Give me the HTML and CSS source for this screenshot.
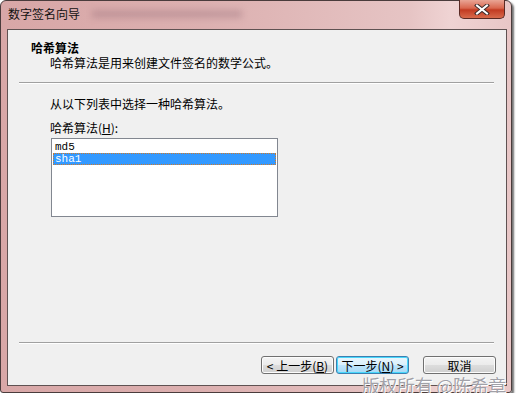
FILE: index.html
```html
<!DOCTYPE html>
<html lang="zh-CN">
<head>
<meta charset="utf-8">
<title>数字签名向导</title>
<link rel="stylesheet" href="styles.css">
</head>
<body>
<div class="window">
	<div class="titlebar">
		<span class="caption">数字签名向导</span>
		<span class="smudge"></span>
		<span class="close">
			<svg width="16" height="11" viewBox="0 0 16 11">
				<path d="M3 1.5 L13 9.5 M13 1.5 L3 9.5" stroke="#3a2a2a" stroke-width="4" stroke-linecap="square"/>
				<path d="M3 1.5 L13 9.5 M13 1.5 L3 9.5" stroke="#fff" stroke-width="2" stroke-linecap="square"/>
			</svg>
		</span>
	</div>
	<div class="client">
		<div class="header">
			<div class="head-title">哈希算法</div>
			<div class="head-sub">哈希算法是用来创建文件签名的数学公式。</div>
		</div>
		<div class="rule"></div>
		<div class="content">
			<div class="intro">从以下列表中选择一种哈希算法。</div>
			<div class="label">哈希算法(<u>H</u>):</div>
			<ul class="listbox">
				<li>md5</li>
				<li class="select">sha1</li>
			</ul>
		</div>
		<div class="rule"></div>
		<div class="buttons">
			<span class="btn">&lt; 上一步(<u>B</u>)</span>
			<span class="btn default">下一步(<u>N</u>) &gt;</span>
			<span class="btn cancel">取消</span>
		</div>
		<div class="mark">版权所有 @陈希章</div>
	</div>
</div>
</body>
</html>
```

FILE: styles.css
```css
*{
	padding: 0;
	margin: 0;
	box-sizing: border-box;
}
body{
	background: #fff;
	font: 12px/15px "Noto Sans CJK SC", sans-serif;
	color: #000;
}
ul,li{
	list-style: none;
}
.window {
	width: 512px;
	height: 393px;
	border: 1px solid #4a3c3c;
	border-radius: 6px 6px 3px 3px;
	background: linear-gradient(to right, #d8a7a7, #dcb0b0 40%, #e6c4c4 80%, #efd3d3 88%, #e8c6c6);
	box-shadow: 2px 2px 2px rgba(0,0,0,.55);
}
.titlebar {
	display: flex;
	align-items: flex-start;
	height: 28px;
	padding-left: 7px;
}
.caption {
	margin-top: 5px;
	color: #111;
}
.smudge {
	width: 150px;
	height: 8px;
	margin: 9px 0 0 12px;
	background: rgba(150,110,120,.35);
	filter: blur(3px);
}
.close {
	display: flex;
	justify-content: center;
	align-items: center;
	margin-left: auto;
	margin-right: 6px;
	width: 46px;
	height: 19px;
	margin-top: -1px;
	border: 1px solid #5a2a24;
	border-top: none;
	border-radius: 0 0 5px 5px;
	background: linear-gradient(to bottom, #e9a595, #d9674f 45%, #c23b22 55%, #d86a4c);
}
.client {
	position: relative;
	width: 500px;
	height: 357px;
	margin-left: 6px;
	border: 1px solid #5f5252;
	background: #f0f0f0;
}
.header {
	height: 52px;
	padding: 10px 0 0 23px;
}
.head-title {
	font-weight: bold;
}
.head-sub {
	padding-left: 19px;
}
.rule {
	margin-left: 11px;
	width: 475px;
	height: 2px;
	border-top: 1px solid #a0a0a0;
	border-bottom: 1px solid #fff;
}
.content {
	height: 258px;
	padding: 12px 0 0 42px;
}
.label {
	margin-top: 9px;
}
.listbox {
	margin: 3px 0 0 1px;
	width: 227px;
	height: 79px;
	padding: 2px 1px;
	border: 1px solid #828790;
	background: #fff;
	font: 11px/12px "Liberation Mono", monospace;
}
.listbox li {
	height: 12px;
	padding-left: 2px;
}
.listbox li.select {
	background: #3399ff;
	color: #fff;
	outline: 1px dotted #d07a2a;
	outline-offset: -1px;
}
.buttons {
	display: flex;
	padding: 12px 0 0 253px;
}
.btn {
	display: flex;
	justify-content: center;
	align-items: center;
	width: 73px;
	height: 18px;
	margin-right: 2px;
	border: 1px solid #707070;
	border-radius: 3px;
	background: linear-gradient(to bottom, #f4f4f4, #ebebeb 50%, #dddddd 51%, #cfcfcf);
	box-shadow: inset 0 0 0 1px #fcfcfc;
}
.btn.default {
	border-color: #3c7fb1;
	background: linear-gradient(to bottom, #eaf6fd, #d9f0fc 50%, #bee6fd 51%, #a7d9f5);
	box-shadow: inset 0 0 0 1px #48d7fb;
}
.btn.cancel {
	margin-left: 12px;
}
.mark {
	position: absolute;
	right: 0;
	bottom: -10px;
	font-size: 18px;
	line-height: 19px;
	letter-spacing: -0.3px;
	color: rgba(120,120,130,.7);
	text-shadow: 0 0 1px #fff, 1px 1px 0 #fff;
	white-space: nowrap;
}
```
